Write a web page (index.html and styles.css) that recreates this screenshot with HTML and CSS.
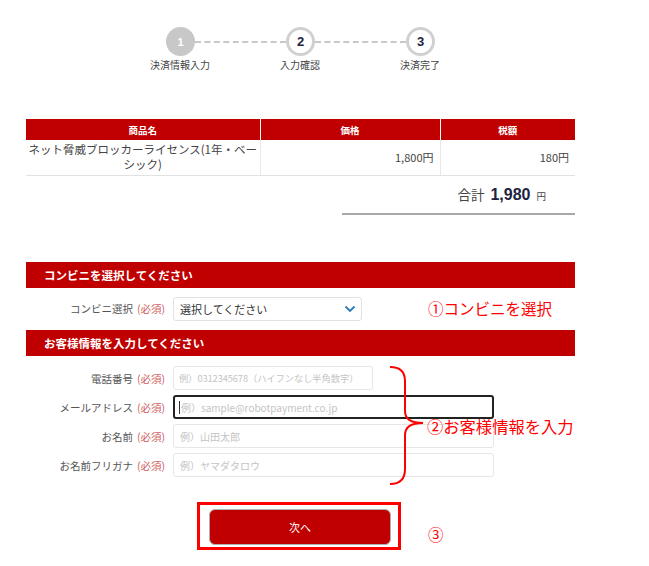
FILE: index.html
```html
<!DOCTYPE html>
<html lang="ja">
<head>
<meta charset="utf-8">
<link rel="stylesheet" href="styles.css">
</head>
<body>
<div class="page">
  <div class="steps">
    <div class="circles">
      <span class="circle done">1</span>
      <span class="dash"></span>
      <span class="circle">2</span>
      <span class="dash"></span>
      <span class="circle">3</span>
    </div>
    <div class="labels">
      <span>決済情報入力</span>
      <span>入力確認</span>
      <span>決済完了</span>
    </div>
  </div>

  <table class="items">
    <thead>
      <tr><th class="c1">商品名</th><th class="c2">価格</th><th class="c3">税額</th></tr>
    </thead>
    <tbody>
      <tr>
        <td class="c1 name">ネット脅威ブロッカーライセンス(1年・ベー<wbr>シック)</td>
        <td class="c2 num">1,800円</td>
        <td class="c3 num">180円</td>
      </tr>
    </tbody>
  </table>

  <div class="total">
    <div class="total-inner"><span class="tl">合計</span><span class="tv">1,980</span><span class="ty">円</span></div>
  </div>

  <div class="section">
    <div class="sec-head">コンビニを選択してください</div>
    <div class="row">
      <label class="lbl">コンビニ選択<span class="req">(必須)</span></label>
      <div class="select"><span>選択してください</span>
        <svg class="chev" width="12" height="8" viewBox="0 0 12 8"><path d="M1.5 1.5 L6 6 L10.5 1.5" fill="none" stroke="#2a7ab8" stroke-width="1.8"/></svg>
      </div>
      <span class="note n1">①コンビニを選択</span>
    </div>
  </div>

  <div class="section">
    <div class="sec-head">お客様情報を入力してください</div>
    <div class="fields">
      <div class="row f">
        <label class="lbl">電話番号<span class="req">(必須)</span></label>
        <div class="input short">例）0312345678（ハイフンなし半角数字）</div>
      </div>
      <div class="row f">
        <label class="lbl">メールアドレス<span class="req">(必須)</span></label>
        <div class="input focus"><span class="caret"></span>例）sample@robotpayment.co.jp</div>
      </div>
      <div class="row f">
        <label class="lbl">お名前<span class="req">(必須)</span></label>
        <div class="input">例）山田太郎</div>
      </div>
      <div class="row f">
        <label class="lbl">お名前フリガナ<span class="req">(必須)</span></label>
        <div class="input">例）ヤマダタロウ</div>
      </div>
      <svg class="brace" width="40" height="124" viewBox="0 0 40 124"><path d="M2 3 Q17 3 17 17 L17 47 Q17 59 35 59 Q17 59 17 71 L17 105 Q17 120 2 120" fill="none" stroke="#ff0000" stroke-width="2"/></svg>
      <span class="note n2">②お客様情報を入力</span>
    </div>
  </div>

  <div class="actions">
    <div class="frame"><button class="next">次へ</button></div>
    <span class="note n3">③</span>
  </div>
</div>
</body>
</html>
```

FILE: styles.css
```css
* { box-sizing: border-box; }
body {
  margin: 0;
  background: #fff;
  font-family: "Noto Sans CJK JP", "Noto Sans", sans-serif;
  color: #333;
}
.page {
  width: 549px;
  margin-left: 26px;
  padding-top: 27px;
}
.steps { margin-left: 94px; }
.circles {
  display: flex;
  align-items: center;
  margin-left: 46px;
}
.circle {
  width: 29px;
  height: 29px;
  border-radius: 50%;
  border: 3px solid #d0d0d0;
  display: flex;
  align-items: center;
  justify-content: center;
  font-family: "Liberation Sans", Arial, sans-serif;
  font-weight: bold;
  font-size: 13px;
  color: #1c2340;
  background: #fff;
}
.circle.done {
  background: #c8c8c8;
  border-color: #c8c8c8;
  color: #fff;
  font-size: 11px;
}
.dash {
  width: 91px;
  border-top: 2px dashed #c8c8c8;
}
.labels {
  display: flex;
  margin-top: 2px;
}
.labels span {
  width: 120px;
  text-align: center;
  font-size: 10px;
  color: #444;
  line-height: 14px;
}
.items {
  width: 549px;
  border-collapse: collapse;
  margin-top: 47px;
  font-size: 11px;
}
.items th {
  background: #c00000;
  color: #fff;
  font-size: 9.5px;
  font-weight: bold;
  height: 21px;
  padding: 0;
  border-left: 1px solid #fff;
}
.items th:first-child { border-left: none; }
.c1 { width: 234px; }
.c2 { width: 180px; }
.c3 { width: 135px; }
.items td {
  height: 35px;
  border-bottom: 1px solid #e2e2e2;
  border-left: 1px solid #e8e8e8;
  padding: 0 6px;
  color: #444;
  line-height: 14px;
}
.items td:first-child { border-left: none; }
.items td.name { text-align: center; padding: 0 2px; font-size: 11.5px; line-height: 15px; line-break: anywhere; }
.items td.num { text-align: right; font-size: 11px; }
.total {
  margin-left: 316px;
  border-bottom: 2px solid #a8a8a8;
  height: 39px;
  display: flex;
  justify-content: flex-end;
  align-items: center;
  padding-right: 29px;
}
.total-inner { display: flex; align-items: baseline; }
.tl { font-size: 13.5px; color: #444; margin-right: 6px; }
.tv { font-family: "Liberation Sans", Arial, sans-serif; font-weight: bold; font-size: 16px; color: #1c2340; margin-right: 6px; }
.ty { font-size: 9.5px; color: #444; }
.section { position: relative; }
.total + .section { margin-top: 47px; }
.sec-head {
  background: #c00000;
  color: #fff;
  font-weight: bold;
  font-size: 11.5px;
  height: 26px;
  line-height: 26px;
  padding-left: 18px;
}
.row {
  display: flex;
  align-items: center;
  height: 42px;
  position: relative;
}
.lbl {
  width: 147px;
  text-align: right;
  font-size: 10.5px;
  color: #555;
  padding-right: 8px;
  white-space: nowrap;
}
.req { color: #d06060; margin-left: 4px; }
.select {
  width: 189px;
  height: 24px;
  border: 1px solid #e2e2e2;
  border-radius: 3px;
  display: flex;
  align-items: center;
  justify-content: space-between;
  padding: 0 5px 0 6px;
  font-size: 11px;
  color: #333;
}
.note {
  color: #ff0000;
  font-size: 15.5px;
  white-space: nowrap;
}
.n1 { position: absolute; left: 402px; top: 9px; }
.fields {
  position: relative;
  padding-top: 8px;
  padding-bottom: 8px;
}
.row.f { height: 29px; }
.input {
  width: 321px;
  height: 24px;
  border: 1px solid #e6e6e6;
  border-radius: 3px;
  font-size: 10px;
  color: #c4c4c4;
  padding-left: 6px;
  display: flex;
  align-items: center;
  white-space: nowrap;
  overflow: hidden;
}
.input.short { width: 200px; font-size: 9.3px; padding-left: 5px; letter-spacing: -0.1px; }
.input.focus { border: 2px solid #222; padding-left: 4px; }
.caret { width: 1px; height: 13px; background: #333; margin-right: 1px; }
.brace { position: absolute; left: 362px; top: 8px; }
.n2 { position: absolute; left: 401px; top: 58px; font-size: 16.3px; }
.actions {
  position: relative;
  margin-top: 14px;
  height: 50px;
}
.frame {
  position: absolute;
  left: 171px;
  top: 0;
  width: 204px;
  height: 48px;
  border: 3px solid #ff0000;
  padding: 4px 9px 0 9px;
}
.next {
  width: 182px;
  height: 36px;
  background: #c00000;
  color: #fff;
  border: 1px solid #b0b0b0;
  border-radius: 6px;
  font-family: "Noto Sans CJK JP", sans-serif;
  font-size: 11px;
  margin: 0;
  display: block;
}
.n3 { position: absolute; left: 402px; top: 21px; }
```
